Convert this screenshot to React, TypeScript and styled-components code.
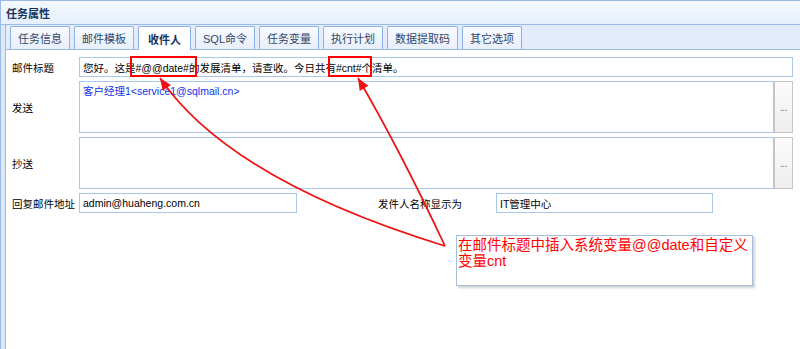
import React from "react";
import styled, { createGlobalStyle } from "styled-components";

const Global = createGlobalStyle`
  html, body { margin: 0; padding: 0; background: #fff; }
  body {
    font-family: "Liberation Sans", "Noto Sans CJK SC", sans-serif;
    font-size: 10.5px;
    color: #000;
  }
`;

const Page = styled.div`
  position: relative;
  width: 800px;
  height: 349px;
  overflow: hidden;
  background: #fff;
`;

const Panel = styled.div`
  height: 348px;
  border-top: 1px solid #99bbe8;
  border-left: 1px solid #99bbe8;
  display: flex;
  flex-direction: column;
`;

const Header = styled.div`
  height: 23px;
  flex: none;
  display: flex;
  align-items: center;
  padding-left: 5px;
  background: linear-gradient(#f3f8ff, #e6effd);
  border-bottom: 1px solid #99bbe8;
  font-weight: bold;
  font-size: 11px;
  color: #15325f;
`;

const Body = styled.div`
  flex: 1;
  display: flex;
  padding-left: 4px;
  background: #dfe8f6;
`;

const TabPanel = styled.div`
  flex: 1;
  display: flex;
  flex-direction: column;
  border-left: 1px solid #99bbe8;
  background: #fff;
`;

const TabStrip = styled.div`
  height: 24px;
  flex: none;
  display: flex;
  align-items: flex-end;
  gap: 4px;
  padding-left: 4px;
  background: #e4ecfb;
  border-bottom: 1px solid #99bbe8;
`;

const Tab = styled.div<{ $active?: boolean }>`
  height: ${(p) => (p.$active ? "23px" : "22px")};
  margin-bottom: ${(p) => (p.$active ? "-1px" : "0")};
  display: flex;
  align-items: center;
  padding: 0 ${(p) => (p.$active ? "9px" : "7px")};
  border: 1px solid #8db2e3;
  border-bottom: none;
  border-radius: 2px 2px 0 0;
  background: ${(p) => (p.$active ? "#fff" : "linear-gradient(#f7faff, #e8effb)")};
  font-weight: ${(p) => (p.$active ? "bold" : "normal")};
  color: ${(p) => (p.$active ? "#15325f" : "#34466a")};
  font-size: 11px;
  white-space: nowrap;
`;

const Content = styled.div`
  padding: 7px 7px 0 6px;
`;

const Form = styled.div`
  display: grid;
  grid-template-columns: 67px 1fr;
  grid-template-rows: 20px 52px 52px 20px;
  row-gap: 4px;
`;

const Label = styled.div`
  display: flex;
  align-items: center;
  white-space: nowrap;
  color: #000;
`;

const TextField = styled.div<{ $width?: number }>`
  box-sizing: border-box;
  height: 20px;
  ${(p) => (p.$width ? `width: ${p.$width}px;` : "")}
  border: 1px solid #a9c8ef;
  background: #fff;
  display: flex;
  align-items: center;
  padding-left: 3px;
  white-space: nowrap;
  overflow: hidden;
`;

const AreaRow = styled.div`
  display: flex;
  height: 52px;
`;

const Area = styled.div<{ $blue?: boolean }>`
  flex: 1;
  box-sizing: border-box;
  border: 1px solid #a9c8ef;
  background: #fff;
  padding: 2px 3px;
  color: ${(p) => (p.$blue ? "#1133ee" : "#000")};
  line-height: 14px;
`;

const MoreButton = styled.div`
  width: 19px;
  box-sizing: border-box;
  border: 1px solid #c6c6c6;
  background: linear-gradient(#fbfbfb, #eeeeee);
  display: flex;
  align-items: center;
  justify-content: center;
  color: #666;
  font-size: 10px;
  letter-spacing: -0.5px;
`;

const LastRow = styled.div`
  display: flex;
  align-items: center;
`;

const InlineLabel = styled.div`
  width: 118px;
  margin-left: 81px;
  white-space: nowrap;
`;

const Overlay = styled.svg`
  position: absolute;
  left: 0;
  top: 0;
  pointer-events: none;
`;

const Callout = styled.div`
  position: absolute;
  left: 456px;
  top: 235px;
  width: 297px;
  height: 51px;
  box-sizing: border-box;
  border: 1px solid #a7bcd9;
  background: #fff;
  box-shadow: 2px 2px 2px rgba(0, 0, 0, 0.18);
  padding: 1px 2px 0 1px;
  color: #ff0000;
  font-size: 14.5px;
  line-height: 16px;
`;

const tabs = ["任务信息", "邮件模板", "收件人", "SQL命令", "任务变量", "执行计划", "数据提取码", "其它选项"];

export default function App() {
  return (
    <Page>
      <Global />
      <Panel>
        <Header>任务属性</Header>
        <Body>
          <TabPanel>
            <TabStrip>
              {tabs.map((t) => (
                <Tab key={t} $active={t === "收件人"}>
                  {t}
                </Tab>
              ))}
            </TabStrip>
            <Content>
              <Form>
                <Label>邮件标题</Label>
                <TextField>您好。这是#@@date#的发展清单，请查收。今日共有#cnt#个清单。</TextField>

                <Label>发送</Label>
                <AreaRow>
                  <Area $blue>客户经理1&lt;service1@sqlmail.cn&gt;</Area>
                  <MoreButton>...</MoreButton>
                </AreaRow>

                <Label>抄送</Label>
                <AreaRow>
                  <Area />
                  <MoreButton>...</MoreButton>
                </AreaRow>

                <Label>回复邮件地址</Label>
                <LastRow>
                  <TextField $width={218}>admin@huaheng.com.cn</TextField>
                  <InlineLabel>发件人名称显示为</InlineLabel>
                  <TextField $width={217}>IT管理中心</TextField>
                </LastRow>
              </Form>
            </Content>
          </TabPanel>
        </Body>
      </Panel>

      <Overlay width={800} height={349} viewBox="0 0 800 349">
        <rect x={131} y={57} width={65} height={19} fill="none" stroke="#ff0000" strokeWidth={2} />
        <rect x={329} y={57} width={42} height={19} fill="none" stroke="#ff0000" strokeWidth={2} />
        <path d="M445,246 Q230,180 160,78" fill="none" stroke="#ee1111" strokeWidth={1.7} />
        <path d="M445,246 Q400,150 358,78" fill="none" stroke="#ee1111" strokeWidth={1.7} />
        <polygon points="160,78 170.9,85.1 162.7,90.7" fill="#ee1111" />
        <polygon points="358,78 368.4,85.8 359.7,90.9" fill="#ee1111" />
      </Overlay>

      <Callout>在邮件标题中插入系统变量@@date和自定义变量cnt</Callout>
    </Page>
  );
}
